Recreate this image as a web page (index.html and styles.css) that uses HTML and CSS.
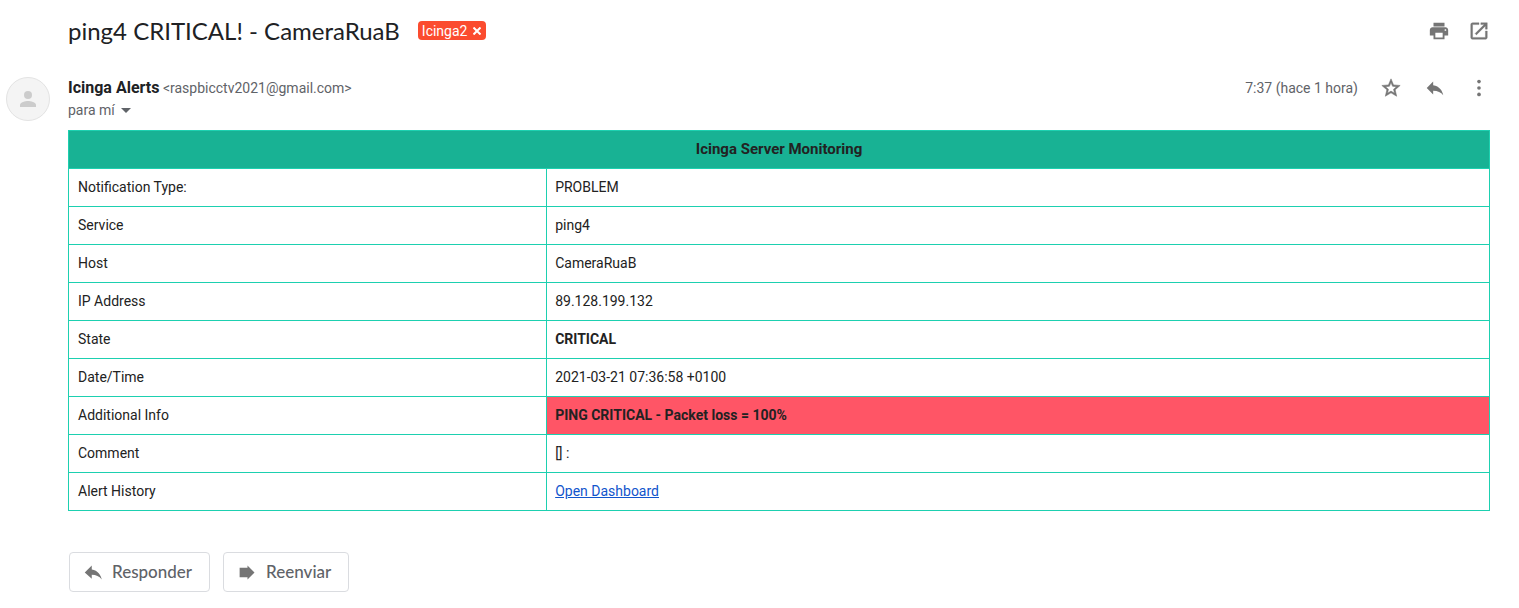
FILE: index.html
```html
<!DOCTYPE html>
<html lang="es">
<head>
<meta charset="utf-8">
<title>ping4 CRITICAL! - CameraRuaB</title>
<link rel="stylesheet" href="styles.css">
</head>
<body>
<main class="message">
  <header class="subject-bar">
    <h1 class="subject">ping4 CRITICAL! - CameraRuaB</h1>
    <span class="label">Icinga2
      <button class="label-remove" aria-label="Quitar etiqueta Icinga2"><svg width="8" height="8" viewBox="0 0 8 8"><path d="M.500 .500l7 7M7.500 .500l-7 7" stroke="currentColor" stroke-width="2"/></svg></button>
    </span>
    <div class="tools">
      <button class="icon-button" aria-label="Imprimir"><svg viewBox="0 0 24 24"><path d="M19 8H5c-1.660 0-3 1.340-3 3v6h4v4h12v-4h4v-6c0-1.660-1.340-3-3-3zm-3 11H8v-5h8v5zm3-7c-.550 0-1-.450-1-1s.450-1 1-1 1 .450 1 1-.450 1-1 1zM18 3H6v4h12z"/></svg></button>
      <button class="icon-button" aria-label="Abrir en una ventana nueva"><svg viewBox="0 0 24 24"><path d="M19 19H5V5h7V3H5c-1.110 0-2 .9-2 2v14c0 1.100.890 2 2 2h14c1.100 0 2-.9 2-2v-7h-2v7zM14 3v2h3.590l-9.830 9.830 1.410 1.410L19 6.410V10h2V3h-7z" stroke="currentColor" stroke-width=".4"/></svg></button>
    </div>
  </header>

  <section class="sender-bar">
    <div class="avatar"><svg width="24" height="24" viewBox="0 0 24 24"><circle cx="12" cy="8" r="4"/><path d="M12 14c-2.670 0-8 1.340-8 4v2h16v-2c0-2.660-5.330-4-8-4z"/></svg></div>
    <div class="sender">
      <div class="from"><b class="name">Icinga Alerts</b> <span class="address">&lt;raspbicctv2021@gmail.com&gt;</span></div>
      <button class="recipients">para mí <svg width="10" height="5" viewBox="0 0 10 5"><path d="M0 0h10L5 5z"/></svg></button>
    </div>
    <div class="meta">
      <time class="time">7:37 (hace 1 hora)</time>
      <button class="icon-button" aria-label="Destacar"><svg viewBox="0 0 24 24"><path d="M22 9.240l-7.190-.620L12 2 9.190 8.630 2 9.240l5.460 4.730L5.820 21 12 17.270 18.180 21l-1.630-7.030L22 9.240zM12 15.400l-3.760 2.270 1-4.280-3.320-2.880 4.380-.380L12 6.100l1.710 4.040 4.380.380-3.320 2.880 1 4.280L12 15.400z" stroke="currentColor" stroke-width=".6"/></svg></button>
      <button class="icon-button" aria-label="Responder"><svg viewBox="0 0 24 24"><path d="M10 9V5l-7 7 7 7v-4.100c5 0 8.500 1.600 11 5.100-1-5-4-10-11-11z"/></svg></button>
      <button class="icon-button" aria-label="Más"><svg viewBox="0 0 24 24"><circle cx="12" cy="5" r="2"/><circle cx="12" cy="12" r="2"/><circle cx="12" cy="19" r="2"/></svg></button>
    </div>
  </section>

  <div class="content">
    <table class="report">
      <thead><tr><th colspan="2" class="report-title">Icinga Server Monitoring</th></tr></thead>
      <tbody>
        <tr><th scope="row">Notification Type:</th><td>PROBLEM</td></tr>
        <tr><th scope="row">Service</th><td>ping4</td></tr>
        <tr><th scope="row">Host</th><td>CameraRuaB</td></tr>
        <tr><th scope="row">IP Address</th><td>89.128.199.132</td></tr>
        <tr><th scope="row">State</th><td><b>CRITICAL</b></td></tr>
        <tr><th scope="row">Date/Time</th><td>2021-03-21 07:36:58 +0100</td></tr>
        <tr><th scope="row">Additional Info</th><td class="alert"><b>PING CRITICAL - Packet loss = 100%</b></td></tr>
        <tr><th scope="row">Comment</th><td>[] :</td></tr>
        <tr><th scope="row">Alert History</th><td><a href="#dashboard">Open Dashboard</a></td></tr>
      </tbody>
    </table>
    <div class="actions">
      <button class="action"><svg viewBox="0 0 24 24"><path d="M10 8.500V4l-8 8 8 7v-4.500c5 0 8.500 1.600 11.500 5.500-1-5-4.500-10.500-11.500-11.500z"/></svg>Responder</button>
      <button class="action"><svg viewBox="0 0 24 24"><path d="M3 6.500h9V4l8 8-8 8v-2.500H3z"/></svg>Reenviar</button>
    </div>
  </div>
</main>
</body>
</html>
```
FILE: styles.css
```css
* { box-sizing: border-box; }

body {
  margin: 0;
  background: #fff;
  color: #202124;
  font: 14px/20px Roboto, "Liberation Sans", sans-serif;
}

button {
  margin: 0;
  padding: 0;
  border: 0;
  background: none;
  color: inherit;
  font: inherit;
  cursor: pointer;
}

svg { display: block; fill: currentColor; }

.message { padding: 15px 29px 16px 0; }

.subject-bar {
  display: flex;
  align-items: center;
  height: 31px;
  padding-left: 68px;
}

.subject {
  margin: 0;
  font: 400 24px/30px Lato, sans-serif;
}

.label {
  display: flex;
  align-items: center;
  gap: 6px;
  height: 19px;
  margin-left: 18px;
  padding: 0 5px 0 4px;
  border-radius: 4px;
  background: #fb4c2f;
  color: #fff;
}

.tools { display: flex; gap: 18px; margin-left: auto; }

.icon-button { color: #757575; }
.icon-button svg { width: 22px; height: 22px; }

.sender-bar {
  display: flex;
  align-items: flex-start;
  padding: 31px 0 0 6px;
}

.avatar {
  display: grid;
  place-items: center;
  width: 44px;
  height: 44px;
  border: 1px solid #e3e3e3;
  border-radius: 50%;
  background: #f4f4f4;
  color: #ccc;
}

.sender { margin-left: 18px; color: #5f6368; }
.from { line-height: 22px; }
.name { color: #202124; font-size: 16px; }

.recipients {
  display: flex;
  align-items: center;
  gap: 6px;
  line-height: 22px;
}

.meta {
  display: flex;
  align-items: center;
  gap: 22px;
  height: 22px;
  margin-left: auto;
  color: #5f6368;
}

.content { padding: 9px 0 0 68px; }

.report {
  width: 100%;
  border: 1px solid #1dd0b0;
  border-collapse: collapse;
  color: #222;
}

.report th,
.report td {
  padding: 8px 8px 9px;
  border: 1px solid #1dd0b0;
  font-weight: 400;
  text-align: left;
}

.report tbody th { width: 33.65%; padding-left: 9px; }
.report b { font-weight: 700; }

.report .report-title {
  background: #18b294;
  font-size: 15px;
  font-weight: 700;
  text-align: center;
}

.report .alert { background: #ff5566; }
.report a { color: #15c; }

.actions { display: flex; gap: 13px; padding: 41px 0 0 1px; }

.action {
  display: flex;
  align-items: center;
  gap: 8px;
  height: 40px;
  padding: 0 17px 0 13px;
  border: 1px solid #dadce0;
  border-radius: 4px;
  color: #5f6368;
  font: 500 17px/20px Lato, sans-serif;
}

.action svg { width: 21px; height: 21px; color: #757575; }
```
